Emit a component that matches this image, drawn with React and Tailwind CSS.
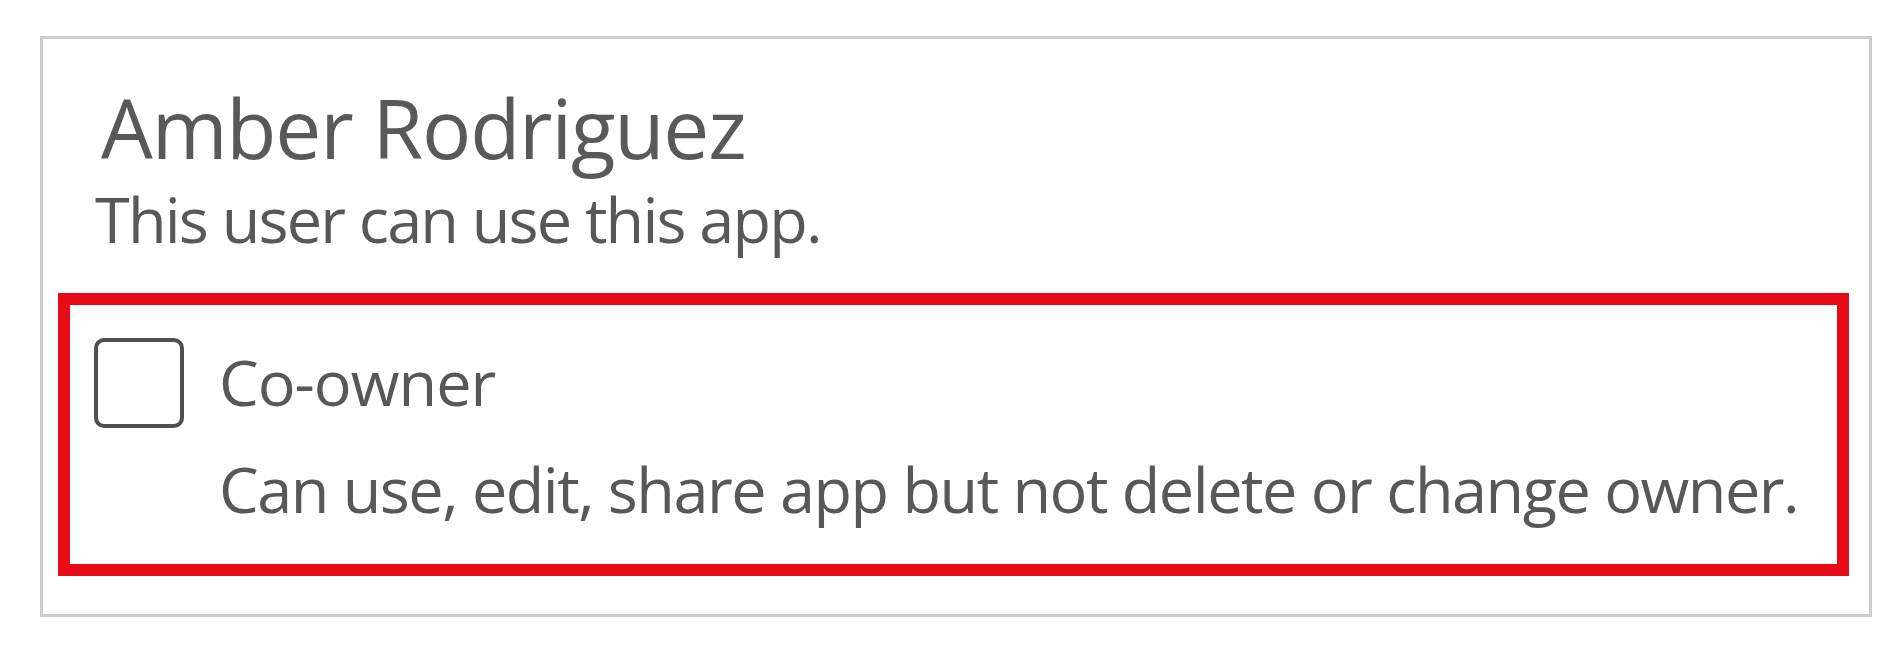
import React, { useState } from 'react';

export default function App() {
  const [checked, setChecked] = useState(false);

  return (
    <div className="w-[1904px] h-[663px] bg-white pt-[36px] pl-[40px]" style={{ fontFamily: '"Open Sans", "Noto Sans", sans-serif' }}>
      <div className="w-[1832px] h-[581px] border-[3px] border-[#cdcdcd] flex flex-col">
        <h1 className="mt-[47px] pl-[58px] text-[82px] leading-none font-normal tracking-[-1.2px] text-[#595959]">
          Amber Rodriguez
        </h1>
        <p className="mt-[19px] pl-[52px] text-[63px] leading-none tracking-[-1.8px] text-[#585858]">
          This user can use this app.
        </p>
        <div className="mt-[43px] ml-[15px] w-[1791px] h-[283px] border-[12px] border-[#e80b17] flex gap-[35px] pl-[24px] pt-[33px]">
          <button
            onClick={() => setChecked(!checked)}
            className="w-[90px] h-[90px] shrink-0 rounded-[10px] border-[4px] border-[#505050] bg-white"
            aria-label="Co-owner"
          >
            {checked && (
              <svg viewBox="0 0 24 24" className="w-full h-full" fill="none" stroke="#505050" strokeWidth="2">
                <path d="M5 12l5 5 9-10" />
              </svg>
            )}
          </button>
          <div className="flex flex-col pt-[12px]">
            <span className="text-[63px] leading-none tracking-[-1px] text-[#585858]">Co-owner</span>
            <span className="mt-[44px] text-[63px] leading-none tracking-[-1.5px] whitespace-nowrap text-[#585858]">
              Can use, edit, share app but not delete or change owner.
            </span>
          </div>
        </div>
      </div>
    </div>
  );
}
